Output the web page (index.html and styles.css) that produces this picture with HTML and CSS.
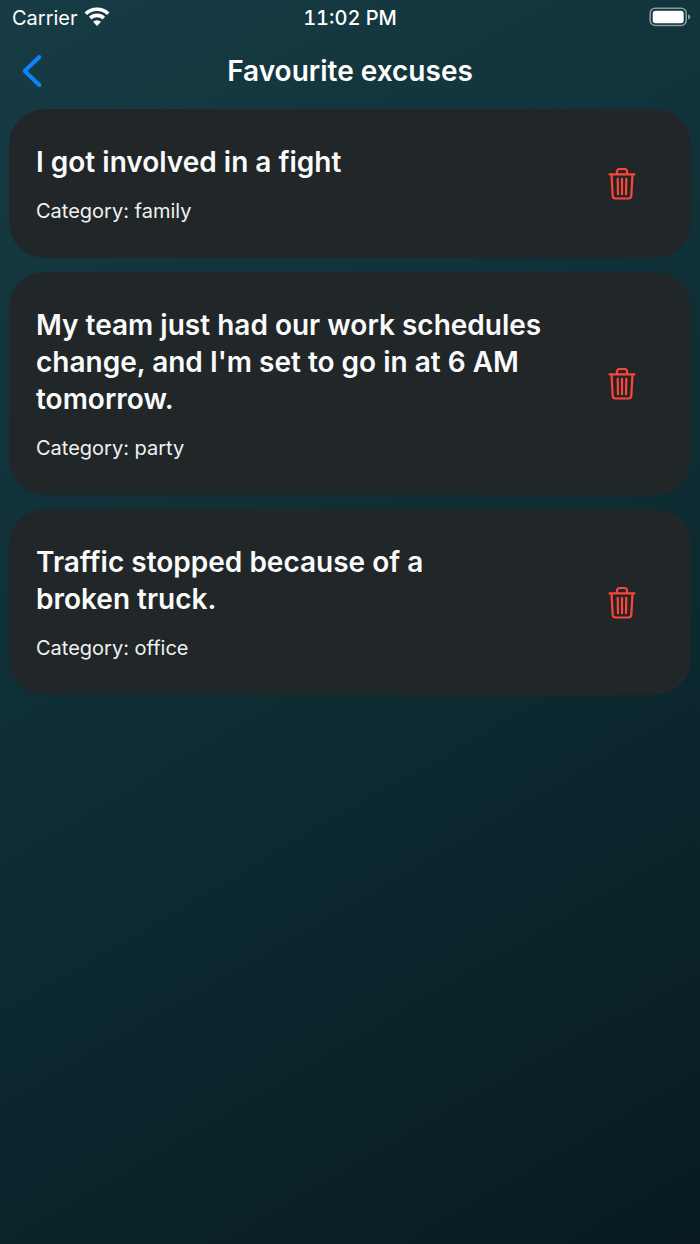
FILE: index.html
```html
<!DOCTYPE html>
<html lang="en">
<head>
    <meta charset="UTF-8">
    <meta name="viewport" content="width=device-width, initial-scale=1.0">
    <title>Favourite excuses</title>
    <link rel="stylesheet" href="styles.css">
</head>
<body>
    <svg class="sprite" aria-hidden="true">
        <symbol id="trash" viewBox="0 0 28 34">
            <path d="M1.500 7.300h25M9 7V4.500A2.500 2.500 0 0 1 11.500 2h5A2.500 2.500 0 0 1 19 4.500V7M3.500 7.500l1.200 21.200a3 3 0 0 0 3 2.800h12.600a3 3 0 0 0 3-2.800l1.200-21.200"/>
            <path class="thin" d="M9.700 11.800l.3 15.400M14 11.800v15.400M18.300 11.800l-.3 15.400"/>
        </symbol>
    </svg>
    <div class="status-bar">
        <div class="carrier">
            <span>Carrier</span>
            <svg class="wifi" viewBox="0 0 26 22" aria-hidden="true">
                <path d="M1.800 6.800a16 16 0 0 1 22.400 0M6.200 11.200a9.800 9.800 0 0 1 13.600 0"/>
                <path class="dot" d="M9 14.800a6 6 0 0 1 8 0L13 19z"/>
            </svg>
        </div>
        <div class="time">11:02 PM</div>
        <svg class="battery" viewBox="0 0 42 22" aria-hidden="true">
            <rect class="shell" x="1.200" y="1.200" width="36" height="17.300" rx="5"/>
            <rect class="level" x="3.700" y="3.700" width="31" height="12.500" rx="3"/>
            <path class="cap" d="M39 7.200q2.400 1 2.400 2.700T39 12.600z"/>
        </svg>
    </div>
    <header>
        <button class="back" aria-label="Back">
            <svg viewBox="0 0 20 34" aria-hidden="true"><path d="M17.300 3L2.700 17l14.600 14"/></svg>
        </button>
        <h1>Favourite excuses</h1>
    </header>
    <main>
        <div class="excuse">
            <div class="excuse-text">
                <h2>I got involved in a fight</h2>
                <p>Category: family</p>
            </div>
            <button class="delete" aria-label="Delete"><svg><use href="#trash"/></svg></button>
        </div>
        <div class="excuse">
            <div class="excuse-text">
                <h2>My team just had our work schedules<br>change, and I'm set to go in at 6 AM<br>tomorrow.</h2>
                <p>Category: party</p>
            </div>
            <button class="delete" aria-label="Delete"><svg><use href="#trash"/></svg></button>
        </div>
        <div class="excuse">
            <div class="excuse-text">
                <h2>Traffic stopped because of a<br>broken truck.</h2>
                <p>Category: office</p>
            </div>
            <button class="delete" aria-label="Delete"><svg><use href="#trash"/></svg></button>
        </div>
    </main>
</body>
</html>
```

FILE: styles.css
```css
body {
    font-family: Inter, "Liberation Sans", sans-serif;
    margin: 0;
    min-height: 100vh;
    background: linear-gradient(150deg, #173c45 0%, #12343c 25%, #0c2a30 60%, #071b21 100%);
    color: #fff;
}
h1, h2, p {
    margin: 0;
    font-weight: normal;
}
button {
    background: none;
    border: none;
    padding: 0;
    cursor: pointer;
}
svg {
    display: block;
    fill: none;
}
.sprite {
    position: absolute;
    width: 0;
    height: 0;
}
.status-bar {
    display: grid;
    grid-template-columns: 1fr auto 1fr;
    align-items: center;
    height: 36px;
    padding: 0 9px;
    font-size: 20px;
}
.carrier {
    display: flex;
    align-items: center;
    gap: 6px;
    padding-left: 3px;
}
.wifi {
    width: 26px;
    height: 22px;
    stroke: #fff;
    stroke-width: 3.7;
}
.wifi .dot {
    fill: #fff;
    stroke: none;
}
.time {
    font-weight: 500;
    font-variant-numeric: tabular-nums;
}
.battery {
    width: 42px;
    height: 22px;
    justify-self: end;
}
.battery .shell {
    stroke: #839aa0;
    stroke-width: 1.6;
}
.battery .level {
    fill: #fff;
}
.battery .cap {
    fill: #839aa0;
}
header {
    display: grid;
    grid-template-columns: 1fr auto 1fr;
    align-items: center;
    height: 70px;
    padding: 0 22px;
}
header h1 {
    font-size: 28px;
    font-weight: 600;
}
.back {
    justify-self: start;
}
.back svg {
    width: 20px;
    height: 34px;
    stroke: #0a84ff;
    stroke-width: 4;
    stroke-linecap: round;
    stroke-linejoin: round;
}
main {
    display: flex;
    flex-direction: column;
    gap: 14px;
    padding: 3px 9px;
}
.excuse {
    display: flex;
    align-items: center;
    justify-content: space-between;
    padding: 35px 55px 34px 27px;
    background: #212628;
    border-radius: 36px;
}
.excuse h2 {
    font-size: 28px;
    font-weight: 600;
    line-height: 37px;
    color: #fafafa;
}
.excuse p {
    margin-top: 17px;
    font-size: 20px;
    line-height: 26px;
    color: #f0f2f2;
}
.delete svg {
    width: 28px;
    height: 34px;
    stroke: #ff453a;
    stroke-width: 2.2;
    stroke-linecap: round;
    stroke-linejoin: round;
}
.delete .thin {
    stroke-width: 1.8;
}
```
